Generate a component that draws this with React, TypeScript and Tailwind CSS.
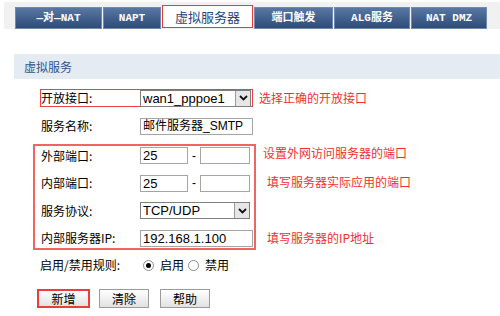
import React from "react";

const CJK = "font-['Noto_Sans_CJK_SC',sans-serif]";
const FIELD = "font-['Liberation_Sans','Noto_Sans_CJK_SC',sans-serif]";

const tabs = [
  { label: "—对—NAT", w: "w-[87px]" },
  { label: "NAPT", w: "w-[58px]" },
  { label: "虚拟服务器", w: "w-[91px]", active: true },
  { label: "端口触发", w: "w-[79px]" },
  { label: "ALG服务", w: "w-[76px]" },
  { label: "NAT DMZ", w: "w-[76px]" },
];

function Chevron() {
  return (
    <svg width="9" height="6" viewBox="0 0 9 6">
      <path d="M1 1 L4.5 4.5 L8 1" fill="none" stroke="#111" strokeWidth="1.8" />
    </svg>
  );
}

function Select({ value, w }: { value: string; w: string }) {
  return (
    <div className={`${w} h-[17px] border border-[#7f7f7f] bg-white flex items-stretch`}>
      <span className={`flex-1 pl-[2px] text-[13px] leading-[15px] text-black ${FIELD}`}>{value}</span>
      <span className="w-[15px] bg-[#e6e6e6] border-l border-[#9a9a9a] flex items-center justify-center">
        <Chevron />
      </span>
    </div>
  );
}

function Input({ value = "", w, small }: { value?: string; w: string; small?: boolean }) {
  return (
    <div
      className={`${w} h-[17px] border border-[#a5a5a5] bg-white pl-[2px] ${
        small ? "text-[12px]" : "text-[13px]"
      } leading-[15px] text-black whitespace-nowrap overflow-hidden ${FIELD}`}
    >
      {value}
    </div>
  );
}

function Radio({ checked }: { checked?: boolean }) {
  return (
    <span className="w-[11px] h-[11px] rounded-full border border-[#8c8c8c] bg-white flex items-center justify-center">
      {checked && <span className="w-[5px] h-[5px] rounded-full bg-black" />}
    </span>
  );
}

function Button({ label, red }: { label: string; red?: boolean }) {
  return (
    <div
      className={`h-[19px] flex items-center justify-center text-[12px] text-black bg-gradient-to-b from-white to-[#e2e2e2] ${CJK} ${
        red ? "w-[53px] border-2 border-[#ee3b3b]" : "w-[50px] border border-[#9b9b9b]"
      }`}
    >
      {label}
    </div>
  );
}

export default function App() {
  return (
    <div className={`w-[500px] h-[316px] bg-white overflow-hidden ${CJK}`}>
      {/* tab strip */}
      <div className="mt-[2px] ml-[4px] h-[27px] bg-[#f1f1f1] flex items-end pl-[11px] gap-[1px]">
        {tabs.map((t) =>
          t.active ? (
            <div
              key={t.label}
              className={`${t.w} h-[23px] mb-[1px] bg-white border border-[#e43b3b] flex items-center justify-center text-[13px] text-[#24467a]`}
            >
              {t.label}
            </div>
          ) : (
            <div
              key={t.label}
              className={`${t.w} h-[22px] bg-gradient-to-b from-[#5877a2] to-[#2e4c77] border border-[#6f8bb2] flex items-center justify-center text-[11px] font-bold text-white font-['Liberation_Mono','Noto_Sans_CJK_SC',monospace]`}
            >
              {t.label}
            </div>
          )
        )}
      </div>

      {/* section header */}
      <div className="mt-[25px] ml-[14px] h-[25px] bg-[#e4ebf3] pl-[10px] flex items-center text-[12px] text-[#2f5589]">
        虚拟服务
      </div>

      {/* 开放接口 */}
      <div className="mt-[10px] flex items-center">
        <div className="ml-[40px] w-[213px] h-[18px] border border-[#ee4040] flex items-center">
          <span className="w-[99px] text-[12px] text-black">开放接口:</span>
          <Select value="wan1_pppoe1" w="w-[111px]" />
        </div>
        <span className="ml-[6px] text-[12px] text-[#f03030]">选择正确的开放接口</span>
      </div>

      {/* 服务名称 */}
      <div className="mt-[10px] flex items-center">
        <span className="ml-[41px] w-[99px] text-[12px] text-black">服务名称:</span>
        <Input value="邮件服务器_SMTP" w="w-[113px]" small />
      </div>

      {/* port group */}
      <div className="mt-[9px] flex items-start">
        <div className="ml-[33px] w-[223px] h-[106px] border-2 border-[#f06464] flex flex-col gap-[8px] pl-[6px]">
          <div className="h-[20px] flex items-center">
            <span className="w-[99px] text-[12px] text-black">外部端口:</span>
            <Input value="25" w="w-[48px]" />
            <span className={`w-[12px] text-center text-[12px] ${FIELD}`}>-</span>
            <Input w="w-[50px]" />
          </div>
          <div className="h-[20px] flex items-center">
            <span className="w-[99px] text-[12px] text-black">内部端口:</span>
            <Input value="25" w="w-[48px]" />
            <span className={`w-[12px] text-center text-[12px] ${FIELD}`}>-</span>
            <Input w="w-[50px]" />
          </div>
          <div className="h-[20px] flex items-center">
            <span className="w-[99px] text-[12px] text-black">服务协议:</span>
            <Select value="TCP/UDP" w="w-[110px]" />
          </div>
          <div className="h-[20px] flex items-center">
            <span className="w-[99px] text-[12px] text-black">内部服务器IP:</span>
            <Input value="192.168.1.100" w="w-[113px]" />
          </div>
        </div>
        <div className="flex flex-col gap-[8px] text-[12px] text-[#f03030]">
          <span className="h-[20px] leading-[18px] ml-[7px]">设置外网访问服务器的端口</span>
          <span className="h-[20px] leading-[20px] ml-[11px]">填写服务器实际应用的端口</span>
          <span className="h-[20px]" />
          <span className="h-[20px] leading-[20px] ml-[11px]">填写服务器的IP地址</span>
        </div>
      </div>

      {/* 启用/禁用 */}
      <div className="mt-[6px] h-[18px] flex items-center text-[12px] text-black">
        <span className="ml-[40px] w-[103px]">启用/禁用规则:</span>
        <Radio checked />
        <span className="ml-[6px] w-[28px]">启用</span>
        <Radio />
        <span className="ml-[6px]">禁用</span>
      </div>

      {/* buttons */}
      <div className="mt-[15px] ml-[37px] flex items-center gap-[9px]">
        <Button label="新增" red />
        <Button label="清除" />
        <div className="ml-[2px]">
          <Button label="帮助" />
        </div>
      </div>
    </div>
  );
}
